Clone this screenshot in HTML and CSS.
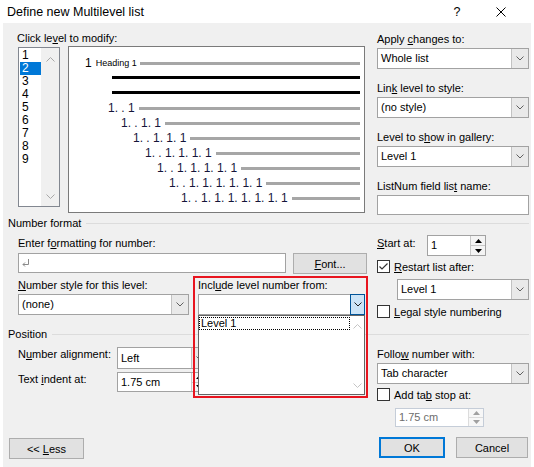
FILE: index.html
```html
<!DOCTYPE html>
<html>
<head>
<meta charset="utf-8">
<title>Define new Multilevel list</title>
<link rel="stylesheet" href="styles.css">
</head>
<body>
<div class="window">
  <div class="titlebar">
    <span class="title">Define new Multilevel list</span>
    <span class="tb-help">?</span>
    <svg class="tb-close" width="10" height="10" viewBox="0 0 10 10"><path d="M0.5 0.5 L9.5 9.5 M9.5 0.5 L0.5 9.5" stroke="#000" stroke-width="1" fill="none"/></svg>
  </div>

  <div class="dialog">
    <div class="cols top">
      <div class="top-left">
        <div class="lbl nudge">Click le<u>v</u>el to modify:</div>
        <div class="top-row">
          <div class="levels">
            <div class="items">
              <div class="item">1</div>
              <div class="item sel">2</div>
              <div class="item">3</div>
              <div class="item">4</div>
              <div class="item">5</div>
              <div class="item">6</div>
              <div class="item">7</div>
              <div class="item">8</div>
              <div class="item">9</div>
            </div>
            <div class="vscroll">
              <svg width="9" height="5" viewBox="0 0 9 5"><polyline points="0.5,4.5 4.5,0.5 8.5,4.5" fill="none" stroke="#a8a8a8"/></svg>
              <svg width="9" height="5" viewBox="0 0 9 5"><polyline points="0.5,0.5 4.5,4.5 8.5,0.5" fill="none" stroke="#a8a8a8"/></svg>
            </div>
          </div>
          <div class="preview">
            <div class="prow l1"><span class="pnum">1</span><span class="phead">Heading 1</span><span class="pline"></span></div>
            <div class="prow l2"><span class="pline black"></span></div>
            <div class="prow l2"><span class="pline black"></span></div>
            <div class="prow l4"><span class="ptxt">1. . 1</span><span class="pline"></span></div>
            <div class="prow l5"><span class="ptxt">1. . 1. 1</span><span class="pline"></span></div>
            <div class="prow l6"><span class="ptxt">1. . 1. 1. 1</span><span class="pline"></span></div>
            <div class="prow l7"><span class="ptxt">1. . 1. 1. 1. 1</span><span class="pline"></span></div>
            <div class="prow l8"><span class="ptxt">1. . 1. 1. 1. 1. 1</span><span class="pline"></span></div>
            <div class="prow l9"><span class="ptxt">1. . 1. 1. 1. 1. 1. 1</span><span class="pline"></span></div>
            <div class="prow l10"><span class="ptxt">1. . 1. 1. 1. 1. 1. 1. 1</span><span class="pline"></span></div>
          </div>
        </div>
      </div>

      <div class="side side-top">
        <div class="block">
          <div class="lbl cap">Apply <u>c</u>hanges to:</div>
          <div class="combo"><span class="val">Whole list</span><span class="dd"><svg width="8" height="5" viewBox="0 0 8 5"><polyline points="0.5,0.5 4,4 7.5,0.5" fill="none" stroke="#606060"/></svg></span></div>
        </div>
        <div class="block">
          <div class="lbl cap">Lin<u>k</u> level to style:</div>
          <div class="combo"><span class="val">(no style)</span><span class="dd"><svg width="8" height="5" viewBox="0 0 8 5"><polyline points="0.5,0.5 4,4 7.5,0.5" fill="none" stroke="#606060"/></svg></span></div>
        </div>
        <div class="block">
          <div class="lbl cap">Level to s<u>h</u>ow in gallery:</div>
          <div class="combo"><span class="val">Level 1</span><span class="dd"><svg width="8" height="5" viewBox="0 0 8 5"><polyline points="0.5,0.5 4,4 7.5,0.5" fill="none" stroke="#606060"/></svg></span></div>
        </div>
        <div class="block">
          <div class="lbl cap">ListNum field lis<u>t</u> name:</div>
          <div class="textbox"></div>
        </div>
      </div>
    </div>

    <div class="group group-nf"><span>Number format</span></div>

    <div class="cols nf">
      <div class="main">
        <div class="lbl first">Enter f<u>o</u>rmatting for number:</div>
        <div class="fmt-row">
          <div class="textbox fmt"><svg class="ret" width="8" height="8" viewBox="0 0 8 8"><path d="M6.5 0 V5.5 H1 M3 3.5 L1 5.5 L3 7.5" fill="none" stroke="#8a8a8a" stroke-width="1"/></svg></div>
          <div class="btn font-btn"><span><u>F</u>ont...</span></div>
        </div>
        <div class="style-row">
          <div class="style-col">
            <div class="lbl cap"><u>N</u>umber style for this level:</div>
            <div class="combo"><span class="val">(none)</span><span class="dd"><svg width="8" height="5" viewBox="0 0 8 5"><polyline points="0.5,0.5 4,4 7.5,0.5" fill="none" stroke="#606060"/></svg></span></div>
          </div>
          <div class="include-col">
            <div class="lbl cap">Incl<u>u</u>de level number from:</div>
            <div class="combo active"><span class="val"></span><span class="dd"><svg width="8" height="5" viewBox="0 0 8 5"><polyline points="0.5,0.5 4,4 7.5,0.5" fill="none" stroke="#202020"/></svg></span></div>
          </div>
        </div>
      </div>

      <div class="side">
        <div class="start-row">
          <span class="lbl start-lbl"><u>S</u>tart at:</span>
          <div class="spin start-spin">
            <span class="val">1</span>
            <span class="arrows">
              <span><svg width="7" height="4" viewBox="0 0 7 4"><path d="M0 4 L3.5 0 L7 4Z" fill="#000"/></svg></span>
              <span><svg width="7" height="4" viewBox="0 0 7 4"><path d="M0 0 L3.5 4 L7 0Z" fill="#000"/></svg></span>
            </span>
          </div>
        </div>
        <div class="check-row">
          <span class="chk"><svg width="11" height="11" viewBox="0 0 11 11"><polyline points="1.5,5.5 4,8 9.5,2.5" fill="none" stroke="#333" stroke-width="1.2"/></svg></span>
          <span class="lbl"><u>R</u>estart list after:</span>
        </div>
        <div class="combo restart"><span class="val">Level 1</span><span class="dd"><svg width="8" height="5" viewBox="0 0 8 5"><polyline points="0.5,0.5 4,4 7.5,0.5" fill="none" stroke="#606060"/></svg></span></div>
        <div class="check-row legal">
          <span class="chk"></span>
          <span class="lbl"><u>L</u>egal style numbering</span>
        </div>
      </div>
    </div>

    <div class="group group-pos"><span>Position</span></div>

    <div class="cols pos">
      <div class="main">
        <div class="pos-row">
          <span class="lbl pos-lbl">N<u>u</u>mber alignment:</span>
          <div class="combo align-combo"><span class="val">Left</span><span class="dd"><svg width="8" height="5" viewBox="0 0 8 5"><polyline points="0.5,0.5 4,4 7.5,0.5" fill="none" stroke="#606060"/></svg></span></div>
        </div>
        <div class="pos-row second">
          <span class="lbl pos-lbl">Text <u>i</u>ndent at:</span>
          <div class="spin indent-spin">
            <span class="val">1.75 cm</span>
            <span class="arrows">
              <span><svg width="7" height="4" viewBox="0 0 7 4"><path d="M0 4 L3.5 0 L7 4Z" fill="#000"/></svg></span>
              <span><svg width="7" height="4" viewBox="0 0 7 4"><path d="M0 0 L3.5 4 L7 0Z" fill="#000"/></svg></span>
            </span>
          </div>
        </div>
      </div>

      <div class="side">
        <div class="lbl cap">Follo<u>w</u> number with:</div>
        <div class="combo"><span class="val">Tab character</span><span class="dd"><svg width="8" height="5" viewBox="0 0 8 5"><polyline points="0.5,0.5 4,4 7.5,0.5" fill="none" stroke="#606060"/></svg></span></div>
        <div class="check-row">
          <span class="chk"></span>
          <span class="lbl">Add ta<u>b</u> stop at:</span>
        </div>
        <div class="spin tab-spin disabled">
          <span class="val">1.75 cm</span>
          <span class="arrows">
            <span><svg width="7" height="4" viewBox="0 0 7 4"><path d="M0 4 L3.5 0 L7 4Z" fill="#a0a0a0"/></svg></span>
            <span><svg width="7" height="4" viewBox="0 0 7 4"><path d="M0 0 L3.5 4 L7 0Z" fill="#a0a0a0"/></svg></span>
          </span>
        </div>
      </div>
    </div>

    <div class="footer">
      <div class="btn less-btn"><span>&lt;&lt; <u>L</u>ess</span></div>
      <div class="footer-right">
        <div class="btn ok-btn"><span>OK</span></div>
        <div class="btn cancel-btn"><span>Cancel</span></div>
      </div>
    </div>
  </div>

  <div class="droplist">
    <div class="dl-items">
      <div class="dl-item">Level 1</div>
    </div>
    <div class="dl-scroll">
      <svg width="9" height="5" viewBox="0 0 9 5"><polyline points="0.5,4.5 4.5,0.5 8.5,4.5" fill="none" stroke="#c4c4c4"/></svg>
      <svg width="9" height="5" viewBox="0 0 9 5"><polyline points="0.5,0.5 4.5,4.5 8.5,0.5" fill="none" stroke="#c4c4c4"/></svg>
    </div>
  </div>

  <div class="annot"></div>
</div>
</body>
</html>
```

FILE: styles.css
```css
* { box-sizing: border-box; }

html, body {
  margin: 0;
  padding: 0;
}

body {
  width: 534px;
  height: 467px;
  overflow: hidden;
  background: #ffffff;
  font-family: "Liberation Sans", Arial, sans-serif;
  font-size: 11px;
  color: #000;
}

u {
  text-decoration: underline;
  text-underline-offset: 1px;
}

.window {
  position: relative;
  width: 534px;
  height: 467px;
}

/* title bar */
.titlebar {
  height: 23px;
  display: flex;
  align-items: center;
  padding-left: 7px;
  font-size: 12.5px;
  background: #fff;
}
.title { flex: 1; }
.tb-help {
  width: 12px;
  text-align: center;
  margin-right: 33px;
  font-size: 12.5px;
}
.tb-close { margin-right: 28px; }

/* dialog body */
.dialog {
  margin: 0 3px;
  height: 444px;
  background: #f0f0f0;
  padding: 8px 2px 0 15px;
}

.lbl {
  display: block;
  line-height: 15px;
  height: 15px;
  white-space: nowrap;
}
.lbl.cap { margin-bottom: 1px; }
.nudge { margin-left: -1px; }

.cols {
  display: grid;
  grid-template-columns: 349px 152px;
  column-gap: 10px;
  align-items: start;
}

/* top section */
.top-row {
  display: flex;
  align-items: flex-start;
  gap: 8px;
}

.levels {
  margin-top: 1px;
  width: 42px;
  height: 160px;
  border: 1px solid #828790;
  background: #fff;
  display: flex;
}
.items {
  width: 22px;
  padding: 1px 0 0 1px;
}
.item {
  height: 13px;
  line-height: 13px;
  padding-left: 2px;
  font-size: 12px;
}
.item.sel {
  background: #0078d7;
  color: #fff;
}
.vscroll {
  flex: 1;
  background: #f0f0f0;
  display: flex;
  flex-direction: column;
  align-items: center;
  justify-content: space-between;
  padding: 9px 0 7px;
}

.preview {
  width: 297px;
  height: 167px;
  border: 1px solid #7a7a7a;
  background: #fff;
  padding: 8px 4px 0 0;
}
.prow {
  height: 15px;
  display: flex;
  align-items: center;
  font-size: 12px;
  color: #15153a;
  white-space: nowrap;
}
.pnum { color: #000; }
.phead {
  font-size: 9px;
  color: #000;
  margin-left: 4px;
}
.pline {
  flex: 1;
  height: 3px;
  margin-top: 2px;
  margin-left: 4px;
  background: #a6a6a6;
}
.phead + .pline { margin-left: 3px; }
.pline.black {
  background: #000;
  margin-left: 0;
  margin-top: 0;
}
.l1 { padding-left: 16px; }
.l2 { padding-left: 43px; }
.l4 { padding-left: 39px; }
.l5 { padding-left: 52px; }
.l6 { padding-left: 64px; }
.l7 { padding-left: 76px; }
.l8 { padding-left: 88px; }
.l9 { padding-left: 100px; }
.l10 { padding-left: 112px; }

.side-top { padding-top: 1px; }
.block + .block { margin-top: 12px; }

/* controls */
.combo {
  display: flex;
  height: 21px;
  border: 1px solid #a2a2a2;
  background: #fff;
}
.combo .val {
  flex: 1;
  padding-left: 3px;
  line-height: 19px;
  white-space: nowrap;
  overflow: hidden;
}
.combo .dd {
  width: 17px;
  border-left: 1px solid #c2c2c2;
  background: #e9e9e9;
  display: flex;
  align-items: center;
  justify-content: center;
}
.combo.active .dd {
  width: 15px;
  background: #cce4f7;
  border: 1px solid #005499;
  margin: -1px -1px -1px 0;
}

.textbox {
  height: 20px;
  border: 1px solid #a2a2a2;
  background: #fff;
}

.btn {
  height: 21px;
  background: #e1e1e1;
  border: 1px solid #adadad;
  display: flex;
  align-items: center;
  justify-content: center;
  white-space: nowrap;
}

.spin {
  display: flex;
  height: 21px;
  border: 1px solid #a2a2a2;
  background: #fff;
}
.spin .val {
  flex: 1;
  padding-left: 3px;
  line-height: 19px;
  white-space: nowrap;
}
.spin .arrows {
  width: 15px;
  display: flex;
  flex-direction: column;
  border-left: 1px solid #c8c8c8;
  background: #f4f4f4;
}
.spin .arrows span {
  flex: 1;
  display: flex;
  align-items: center;
  justify-content: center;
}
.spin .arrows span + span { border-top: 1px solid #c8c8c8; }

.chk {
  width: 13px;
  height: 13px;
  border: 1px solid #333;
  background: #fff;
  margin-right: 4px;
  flex: none;
  display: flex;
}

/* number format section */
.group {
  display: flex;
  align-items: center;
  margin-left: -10px;
  line-height: 15px;
  height: 15px;
  white-space: nowrap;
}
.group::after {
  content: "";
  flex: 1;
  height: 1px;
  background: #dcdcdc;
  margin-left: 5px;
}
.group-nf { margin-top: 1px; }
.group-pos { margin-top: 7px; }

.nf { margin-top: 4px; }
.main .first { margin-top: 1px; }

.fmt-row {
  margin-top: 2px;
  display: flex;
  align-items: flex-start;
  gap: 7px;
}
.fmt {
  width: 268px;
  display: flex;
  align-items: center;
  padding-left: 3px;
}
.font-btn { width: 74px; }

.style-row {
  margin-top: 4px;
  display: flex;
  gap: 9px;
}
.style-col { width: 171px; }
.include-col { width: 167px; }

.start-row {
  display: flex;
  align-items: flex-start;
}
.start-lbl {
  width: 50px;
  margin-top: 1px;
}
.start-spin { width: 59px; }

.check-row {
  margin-top: 4px;
  display: flex;
  align-items: flex-start;
  height: 15px;
}
.check-row.legal { margin-top: 5px; }

.restart {
  margin-top: 4px;
  margin-left: 20px;
}

/* position section */
.pos { margin-top: 5px; }
.pos-row {
  display: flex;
  align-items: flex-start;
}
.pos-row.second { margin-top: 3px; }
.pos-lbl { width: 99px; }
.align-combo {
  width: 92px;
  height: 22px;
}
.align-combo .val { line-height: 20px; }
.indent-spin {
  width: 90px;
  height: 20px;
}
.indent-spin .val { line-height: 18px; }

.tab-spin {
  margin-top: 5px;
  margin-left: 18px;
  width: 89px;
  height: 19px;
}
.tab-spin.disabled {
  border-color: #c5cdd8;
  color: #6d6d6d;
}
.tab-spin .val { line-height: 17px; }
.tab-spin .arrows {
  border-left-color: #dcdcdc;
  background: #f7f7f7;
}
.tab-spin .arrows span + span { border-top-color: #dcdcdc; }

/* footer */
.footer {
  margin-top: 10px;
  display: flex;
  justify-content: space-between;
  align-items: flex-start;
  padding-right: 1px;
}
.less-btn {
  width: 75px;
  margin-left: -9px;
  margin-top: 1px;
}
.footer-right {
  display: flex;
  gap: 11px;
}
.ok-btn {
  width: 66px;
  border: 2px solid #0078d7;
}
.cancel-btn { width: 72px; }

/* open drop-down list */
.droplist {
  position: absolute;
  left: 198px;
  top: 315px;
  width: 167px;
  height: 80px;
  border: 1px solid #646464;
  background: #fff;
  display: flex;
}
.dl-items {
  flex: 1;
  padding-top: 1px;
}
.dl-item {
  height: 13px;
  line-height: 11px;
  border: 1px dotted #000;
  padding-left: 1px;
  margin-right: 1px;
  white-space: nowrap;
}
.dl-scroll {
  width: 13px;
  display: flex;
  flex-direction: column;
  align-items: center;
  justify-content: space-between;
  padding: 8px 0 6px;
}

/* red highlight annotation */
.annot {
  position: absolute;
  left: 193px;
  top: 276px;
  width: 175px;
  height: 122px;
  border: 2px solid #e8151f;
  pointer-events: none;
}
```
